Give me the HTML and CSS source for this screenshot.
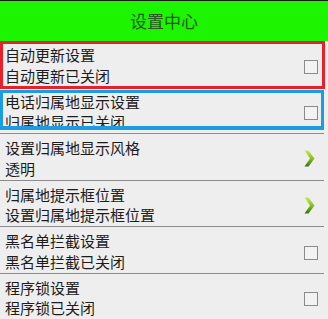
FILE: index.html
```html
<!DOCTYPE html>
<html lang="zh-CN">
<head>
    <meta charset="UTF-8">
    <meta name="viewport" content="width=device-width, initial-scale=1.0">
    <title>设置中心</title>
    <link rel="stylesheet" href="styles.css">
</head>
<body>
    <div class="screen">
        <header class="title-bar">设置中心</header>

        <ul class="settings">
            <li class="item">
                <div class="item-text">
                    <div class="item-title">自动更新设置</div>
                    <div class="item-summary">自动更新已关闭</div>
                </div>
                <span class="checkbox"></span>
            </li>
            <li class="item">
                <div class="item-text">
                    <div class="item-title">电话归属地显示设置</div>
                    <div class="item-summary">归属地显示已关闭</div>
                </div>
                <span class="checkbox"></span>
            </li>
            <li class="item">
                <div class="item-text">
                    <div class="item-title">设置归属地显示风格</div>
                    <div class="item-summary">透明</div>
                </div>
                <svg class="chevron" width="11" height="17" viewBox="0 0 11 17">
                    <defs>
                        <linearGradient id="chev1" x1="0" y1="0" x2="0" y2="1">
                            <stop offset="0" stop-color="#c9ea52"/>
                            <stop offset="0.5" stop-color="#86c21e"/>
                            <stop offset="1" stop-color="#356f10"/>
                        </linearGradient>
                    </defs>
                    <polygon points="0.5,0.5 4.5,0.5 10.5,8.5 4.5,16.5 0.5,16.5 6,8.5" fill="url(#chev1)"/>
                </svg>
            </li>
            <li class="item">
                <div class="item-text">
                    <div class="item-title">归属地提示框位置</div>
                    <div class="item-summary">设置归属地提示框位置</div>
                </div>
                <svg class="chevron" width="11" height="17" viewBox="0 0 11 17">
                    <polygon points="0.5,0.5 4.5,0.5 10.5,8.5 4.5,16.5 0.5,16.5 6,8.5" fill="url(#chev1)"/>
                </svg>
            </li>
            <li class="item">
                <div class="item-text">
                    <div class="item-title">黑名单拦截设置</div>
                    <div class="item-summary">黑名单拦截已关闭</div>
                </div>
                <span class="checkbox"></span>
            </li>
            <li class="item">
                <div class="item-text">
                    <div class="item-title">程序锁设置</div>
                    <div class="item-summary">程序锁已关闭</div>
                </div>
                <span class="checkbox"></span>
            </li>
        </ul>

        <!-- annotation boxes drawn over the list -->
        <div class="mark mark-red"></div>
        <div class="mark mark-blue"></div>
    </div>
</body>
</html>
```

FILE: styles.css
```css
body {
    margin: 0;
    padding: 0;
    background-color: #eeeeee;
    font-family: "Noto Sans CJK SC", "Noto Sans", sans-serif;
    color: #1c1c1c;
}

.screen {
    position: relative;
    width: 328px;
    height: 319px;
    overflow: hidden;
    background-color: #eeeeee;
}

.title-bar {
    height: 40px;
    line-height: 40px;
    border-top: 1px solid #1a1a1a;
    background-color: #1cf400;
    color: #245a1c;
    font-size: 17px;
    text-align: center;
}

.settings {
    list-style: none;
    margin: 0;
    padding: 0;
}

.item {
    display: flex;
    align-items: center;
    padding: 4px 0 0 5px;
    border-bottom: 1px solid #8c8c8c;
    margin-right: 4px;
}

.item-text {
    flex: 1;
    font-size: 15px;
    line-height: 20.75px;
    white-space: nowrap;
}

.checkbox {
    width: 12px;
    height: 12px;
    margin: 2px 6px 0 0;
    border: 1px solid #8a8a8a;
    background-color: #f2f2f2;
}

.chevron {
    display: block;
    margin: 0 9px 0 0;
}

.mark {
    position: absolute;
    left: 0;
    box-sizing: border-box;
    border: 3px solid;
}

.mark-red {
    top: 41px;
    width: 325px;
    height: 48px;
    border-color: #e8202a;
}

.mark-blue {
    top: 90px;
    width: 324px;
    height: 40px;
    border-color: #1b9ee0;
    border-bottom-width: 4px;
}
```
